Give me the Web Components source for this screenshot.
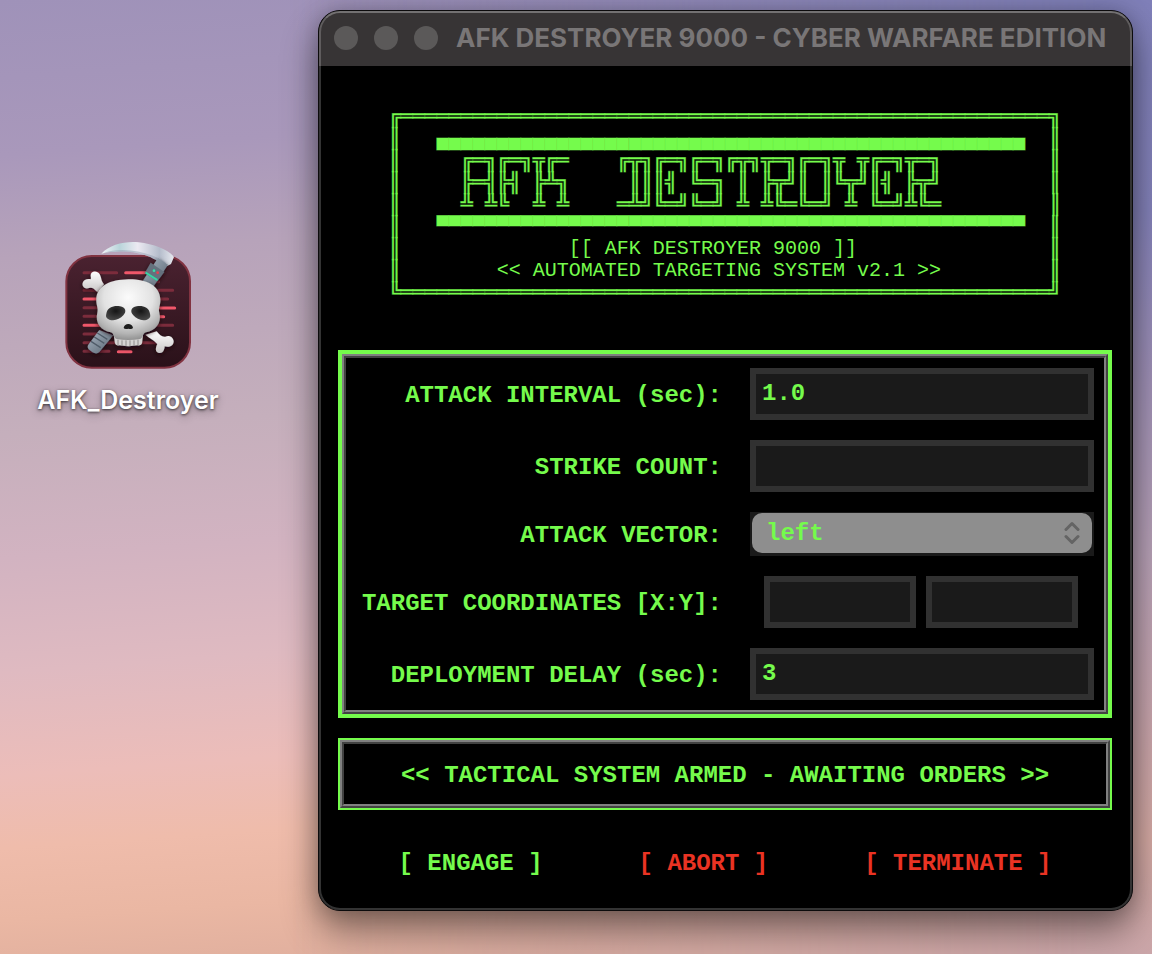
<!DOCTYPE html>
<html lang="en">
<head>
<meta charset="utf-8">
<meta name="viewport" content="width=device-width, initial-scale=1">
<title>AFK DESTROYER 9000</title>
<style>
  html, body { margin: 0; min-height: 100%; }
  body { background: #b9a2b8; }
</style>
</head>
<body>
<desktop-scene>
  <desktop-icon slot="icons">AFK_Destroyer</desktop-icon>
  <app-window heading="AFK DESTROYER 9000 - CYBER WARFARE EDITION">
    <ascii-banner></ascii-banner>
    <control-panel>
      <text-field label="ATTACK INTERVAL (sec):" value="1.0"></text-field>
      <text-field label="STRIKE COUNT:"></text-field>
      <choice-field label="ATTACK VECTOR:" options="left,right,middle"></choice-field>
      <pair-field label="TARGET COORDINATES [X:Y]:"></pair-field>
      <text-field label="DEPLOYMENT DELAY (sec):" value="3"></text-field>
    </control-panel>
    <status-line>&lt;&lt; TACTICAL SYSTEM ARMED - AWAITING ORDERS &gt;&gt;</status-line>
    <command-bar>
      <command-button>[ ENGAGE ]</command-button>
      <command-button kind="danger">[ ABORT ]</command-button>
      <command-button kind="danger">[ TERMINATE ]</command-button>
    </command-bar>
  </app-window>
</desktop-scene>

<script>
const define = (name, html, setup) => {
  const template = document.createElement('template');
  template.innerHTML = html;
  customElements.define(name, class extends HTMLElement {
    constructor() {
      super();
      this.attachShadow({ mode: 'open' }).append(template.content.cloneNode(true));
    }
    connectedCallback() {
      if (setup) setup(this, this.shadowRoot);
    }
  });
};

define('desktop-scene', `
  <style>
    :host {
      --green: #75fb4c;
      --red: #ea3323;
      --mono: "Liberation Mono", "Courier New", monospace;
      --ui: Inter, "Liberation Sans", sans-serif;
      display: grid;
      grid-template-columns: 256px minmax(0, 1fr);
      column-gap: 62px;
      align-items: start;
      box-sizing: border-box;
      min-height: 100vh;
      padding: 10px 19px 43px 0;
      position: relative;
      isolation: isolate;
      overflow: hidden;
      background: linear-gradient(176deg, #9f92b9 0%, #a998bb 15%, #b7a3ba 25%, #c5afbc 42%, #d2b3c1 54%, #dfbac1 65%, #ecbdb9 75%, #efbcab 82%, #eab7a3 89%, #dfae9d 96%);
    }
    :host::before {
      content: "";
      position: absolute;
      inset: 0;
      z-index: -1;
      background: linear-gradient(#7f7fb8 0%, #8583bb 22%, #a192b8 40%, #b9a2b8 58%, #caa6ae 75%, #d6aaa4 88%, #cba6a9 100%);
      -webkit-mask-image: linear-gradient(90deg, transparent 25%, #000 95%);
      mask-image: linear-gradient(90deg, transparent 25%, #000 95%);
    }
  </style>
  <slot name="icons"></slot>
  <slot></slot>`);

define('desktop-icon', `
  <style>
    :host {
      display: flex;
      flex-direction: column;
      align-items: center;
      margin-top: 228px;
      font: 600 25px/32px var(--ui);
      color: #fff;
      text-shadow: 0 1px 3px rgba(0, 0, 0, .7), 0 3px 8px rgba(0, 0, 0, .35);
    }
    svg { display: block; width: 136px; height: 134px; margin-bottom: 12px; }
  </style>
  <svg viewBox="0 0 408 402" aria-hidden="true">
    <defs>
      <linearGradient id="tile" x1="0" y1="0" x2="0" y2="1">
        <stop offset="0" stop-color="#4a2230"/><stop offset="1" stop-color="#2a1119"/>
      </linearGradient>
      <radialGradient id="bone" cx=".5" cy=".3" r=".7">
        <stop offset="0" stop-color="#fbfbfb"/><stop offset=".55" stop-color="#e2e2e2"/>
        <stop offset=".85" stop-color="#b4b4b4"/><stop offset="1" stop-color="#929292"/>
      </radialGradient>
      <linearGradient id="small" x1="0" y1="0" x2="0" y2="1">
        <stop offset="0" stop-color="#fff"/><stop offset="1" stop-color="#c9c6c6"/>
      </linearGradient>
      <linearGradient id="blade" x1="0" y1="0" x2="1" y2="0">
        <stop offset="0" stop-color="#f3f3f8"/><stop offset=".25" stop-color="#b9d5da"/>
        <stop offset=".5" stop-color="#eceaf2"/><stop offset=".8" stop-color="#b4bccb"/>
        <stop offset="1" stop-color="#e7e9ef"/>
      </linearGradient>
      <linearGradient id="rod" x1="0" y1="0" x2="1" y2="1">
        <stop offset="0" stop-color="#a9b6c4"/><stop offset="1" stop-color="#57636f"/>
      </linearGradient>
      <radialGradient id="eye" cx=".5" cy=".35" r=".7">
        <stop offset="0" stop-color="#151515"/><stop offset="1" stop-color="#4c4c4c"/>
      </radialGradient>
      <filter id="drop" x="-20%" y="-20%" width="140%" height="150%">
        <feDropShadow dx="0" dy="5" stdDeviation="6" flood-color="#12050a" flood-opacity=".8"/>
      </filter>
    </defs>
    <rect x="19" y="54" width="371" height="335" rx="76" fill="url(#tile)" stroke="#813341" stroke-width="6"/>
    <g stroke-linecap="round" stroke-width="9" stroke="#7c2c3c">
      <path d="M72 104H170M72 157H115M295 157H338M290 183H323M72 209H120M72 235H120M72 288H130M270 262H338M72 314H335M72 340H147M285 131H296"/>
      <path stroke="#f0576a" d="M197 104H262M72 183H115M300 210H344M290 236H311M72 262H120M175 341H213"/>
    </g>
    <path d="M124 47C150 19 196 9 236 13C283 18 327 37 342 57L333 78L322 84L306 80C283 58 243 44 205 41C174 39 146 41 124 47Z" fill="url(#blade)"/>
    <path d="M130 45C180 26 262 36 318 74L306 80C283 58 243 44 205 41C174 39 146 41 130 45Z" fill="#8d99ad" opacity=".45"/>
    <g filter="url(#drop)">
      <path d="M294 60L324 80L276 152L246 132Z" fill="url(#rod)"/>
      <path d="M272 74L313 102L292 130L254 106Z" fill="#65717e"/>
      <path d="M259 105L290 125" stroke="#35d6a4" stroke-width="6" stroke-linecap="round"/>
      <circle cx="282" cy="98" r="4" fill="#35e0aa"/><circle cx="293" cy="104" r="4" fill="#e9404f"/>
      <path d="M118 276L160 292L118 342Q110 350 98 343L86 334Q80 327 86 319Z" fill="url(#rod)"/>
      <path d="M112 285L142 304M103 297L133 316M93 310L122 329" stroke="#505c69" stroke-width="4"/>
    </g>
    <g filter="url(#drop)" fill="url(#small)">
      <path d="M92 112C92 98 112 96 119 109C125 119 122 127 132 139L112 162C101 150 96 147 87 150C76 155 65 146 68 135C70 126 82 121 92 124C94 121 92 117 92 112Z"/>
      <path d="M256 290C272 304 282 305 292 318C286 330 285 343 297 345C309 347 313 336 314 325C325 329 341 325 341 310C340 297 327 290 316 296C306 298 299 291 290 280Z"/>
    </g>
    <g filter="url(#drop)">
      <path d="M160 282H250L246 316Q244 324 232 322Q205 327 178 322Q167 324 165 316Z" fill="#d5d3d3"/>
      <path d="M205 124C258 123 300 143 301 184C302 203 294 210 298 224C306 256 286 277 258 283C247 286 250 300 240 303C218 307 192 307 170 303C160 300 163 286 152 283C124 277 104 256 112 224C116 210 108 203 109 184C110 143 152 125 205 124Z" fill="url(#bone)"/>
    </g>
    <path d="M174 305V322M186 307V324M198 307V325M210 307V325M222 307V324M234 305V322" stroke="#8f8c8c" stroke-width="3"/>
    <path d="M139 227C142 207 163 202 180 205C197 208 201 221 190 232C180 244 163 250 148 245C138 240 137 235 139 227Z" fill="url(#eye)"/>
    <path d="M270 227C267 207 247 202 230 205C213 208 209 221 220 232C230 244 246 250 261 245C271 240 272 235 270 227Z" fill="url(#eye)"/>
    <path d="M191 269Q194 258 205 258Q216 258 219 269Q217 275 205 272Q193 275 191 269Z" fill="#1d1d1d"/>
  </svg>
  <span><slot></slot></span>`);

define('app-window', `
  <style>
    :host {
      display: block;
      box-sizing: border-box;
      border: 1px solid #0c0b0c;
      border-radius: 22px;
      background: #000;
      position: relative;
      box-shadow: 0 20px 36px rgba(0, 0, 0, .42), 0 0 22px rgba(0, 0, 0, .22);
    }
    :host::after {
      content: "";
      position: absolute;
      inset: 0;
      border: 2px solid rgba(255, 255, 255, .2);
      border-top-color: rgba(255, 255, 255, .3);
      border-radius: 21px;
      pointer-events: none;
    }
    header {
      display: flex;
      align-items: center;
      box-sizing: border-box;
      height: 55px;
      padding: 0 0 2px 15px;
      background: #373435;
      border-radius: 21px 21px 0 0;
    }
    .lights { display: flex; gap: 16px; margin-right: 18px; }
    .lights i { width: 24px; height: 24px; border-radius: 50%; background: #5b5959; }
    h1 {
      margin: 0;
      font: 700 26px/32px var(--ui);
      color: #797677;
      white-space: nowrap;
    }
    main { padding: 40px 20px 30px 19px; }
  </style>
  <header><div class="lights"><i></i><i></i><i></i></div><h1></h1></header>
  <main><slot></slot></main>`,
  (host, root) => { root.querySelector('h1').textContent = host.getAttribute('heading'); });

const side = (text) => '║' + text.padEnd(54) + '║';
const bannerRows = [
  '╔' + '═'.repeat(54) + '╗',
  side('   ' + '▄'.repeat(49)),
  side('     ╔═╗╔═╗╦╔═    ╔╦╗╔═╗╔═╗╔╦╗╦═╗╔═╗╦ ╦╔═╗╦═╗'),
  side('     ╠═╣╠╣ ╠╩╗     ║║║╣ ╚═╗ ║ ╠╦╝║ ║╚╦╝║╣ ╠╦╝'),
  side('     ╩ ╩╚  ╩ ╩    ═╩╝╚═╝╚═╝ ╩ ╩╚═╚═╝ ╩ ╚═╝╩╚═'),
  side('   ' + '▀'.repeat(49)),
  side('              [[ AFK DESTROYER 9000 ]]'),
  side('        << AUTOMATED TARGETING SYSTEM v2.1 >>'),
  '╚' + '═'.repeat(54) + '╝'
];

define('ascii-banner', `
  <style>
    :host { display: flex; justify-content: center; margin-bottom: 46px; }
    pre { margin: 0; font: 20px/22px var(--mono); color: var(--green); }
    .art { -webkit-text-stroke: 1px rgba(117, 251, 76, .5); }
  </style>
  <pre></pre>`,
  (host, root) => {
    const parts = bannerRows.join('\n').split(/([═-╬▀▄]+)/);
    root.querySelector('pre').replaceChildren(...parts.map((part, i) => {
      if (i % 2 === 0) return part;
      const span = document.createElement('span');
      span.className = 'art';
      span.textContent = part;
      return span;
    }));
  });

const groove = `
    .outer { border: 2px solid; border-color: #808080 #424242 #424242 #808080; }
    .inner { border: 2px solid; border-color: #424242 #808080 #808080 #424242; }`;

define('control-panel', `
  <style>
    :host { display: block; border: 4px solid var(--green); }
    ${groove}
    .inner { display: flex; flex-direction: column; gap: 20px; padding: 10px; }
  </style>
  <div class="outer"><div class="inner"><slot></slot></div></div>`);

const fieldStyle = `
    :host { display: flex; align-items: center; font: 700 24px/32px var(--mono); color: var(--green); }
    label { flex: 1; padding-top: 4px; text-align: right; margin-right: 28px; white-space: nowrap; }
    .control { flex: 0 0 344px; box-sizing: border-box; }
    input {
      box-sizing: border-box;
      width: 100%;
      min-width: 0;
      height: 52px;
      margin: 0;
      padding: 0 6px 2px;
      border: 6px solid #313131;
      border-radius: 0;
      background: #1a1a1a;
      color: inherit;
      font: inherit;
      outline: none;
    }`;

const setLabel = (host, root) => { root.querySelector('label').textContent = host.getAttribute('label'); };

define('text-field', `
  <style>${fieldStyle}</style>
  <label for="field"></label>
  <div class="control"><input id="field" type="text"></div>`,
  (host, root) => {
    setLabel(host, root);
    root.querySelector('input').value = host.getAttribute('value') || '';
  });

define('choice-field', `
  <style>
    ${fieldStyle}
    .control { position: relative; height: 44px; padding: 1px 2px 3px; background: #1a1a1a; }
    select {
      appearance: none;
      display: block;
      box-sizing: border-box;
      width: 100%;
      height: 40px;
      margin: 0;
      padding: 2px 40px 0 14px;
      border: 0;
      border-radius: 10px;
      background: #8e8e8e;
      color: inherit;
      font: inherit;
      outline: none;
    }
    svg { position: absolute; right: 14px; top: 9px; width: 16px; height: 24px; pointer-events: none; }
  </style>
  <label for="field"></label>
  <div class="control">
    <select id="field"></select>
    <svg viewBox="0 0 16 24" fill="none" stroke="#646464" stroke-width="3" stroke-linecap="round" stroke-linejoin="round" aria-hidden="true">
      <path d="M2 8.500L8 2.500L14 8.500M2 15.500L8 21.500L14 15.500"/>
    </svg>
  </div>`,
  (host, root) => {
    setLabel(host, root);
    root.querySelector('select').replaceChildren(...host.getAttribute('options').split(',').map((o) => new Option(o, o)));
  });

define('pair-field', `
  <style>
    ${fieldStyle}
    .control { display: flex; gap: 10px; padding: 0 16px 0 14px; }
  </style>
  <label for="x"></label>
  <div class="control">
    <input id="x" type="text">
    <input id="y" type="text" aria-label="Target Y">
  </div>`, setLabel);

define('status-line', `
  <style>
    :host {
      display: block;
      margin-top: 20px;
      border: 2px solid var(--green);
      font: 700 24px/32px var(--mono);
      color: var(--green);
      text-align: center;
    }
    ${groove}
    .inner { padding: 16px 10px 12px; }
  </style>
  <div class="outer"><div class="inner" role="status"><slot></slot></div></div>`);

define('command-bar', `
  <style>
    :host { display: flex; justify-content: center; gap: 96px; margin-top: 38px; }
  </style>
  <slot></slot>`);

define('command-button', `
  <style>
    :host { display: block; color: var(--green); }
    :host([kind="danger"]) { color: var(--red); }
    button {
      display: block;
      margin: 0;
      padding: 0;
      border: 0;
      background: none;
      color: inherit;
      font: 700 24px/32px var(--mono);
      white-space: nowrap;
      cursor: pointer;
    }
  </style>
  <button type="button"><slot></slot></button>`);
</script>
</body>
</html>
